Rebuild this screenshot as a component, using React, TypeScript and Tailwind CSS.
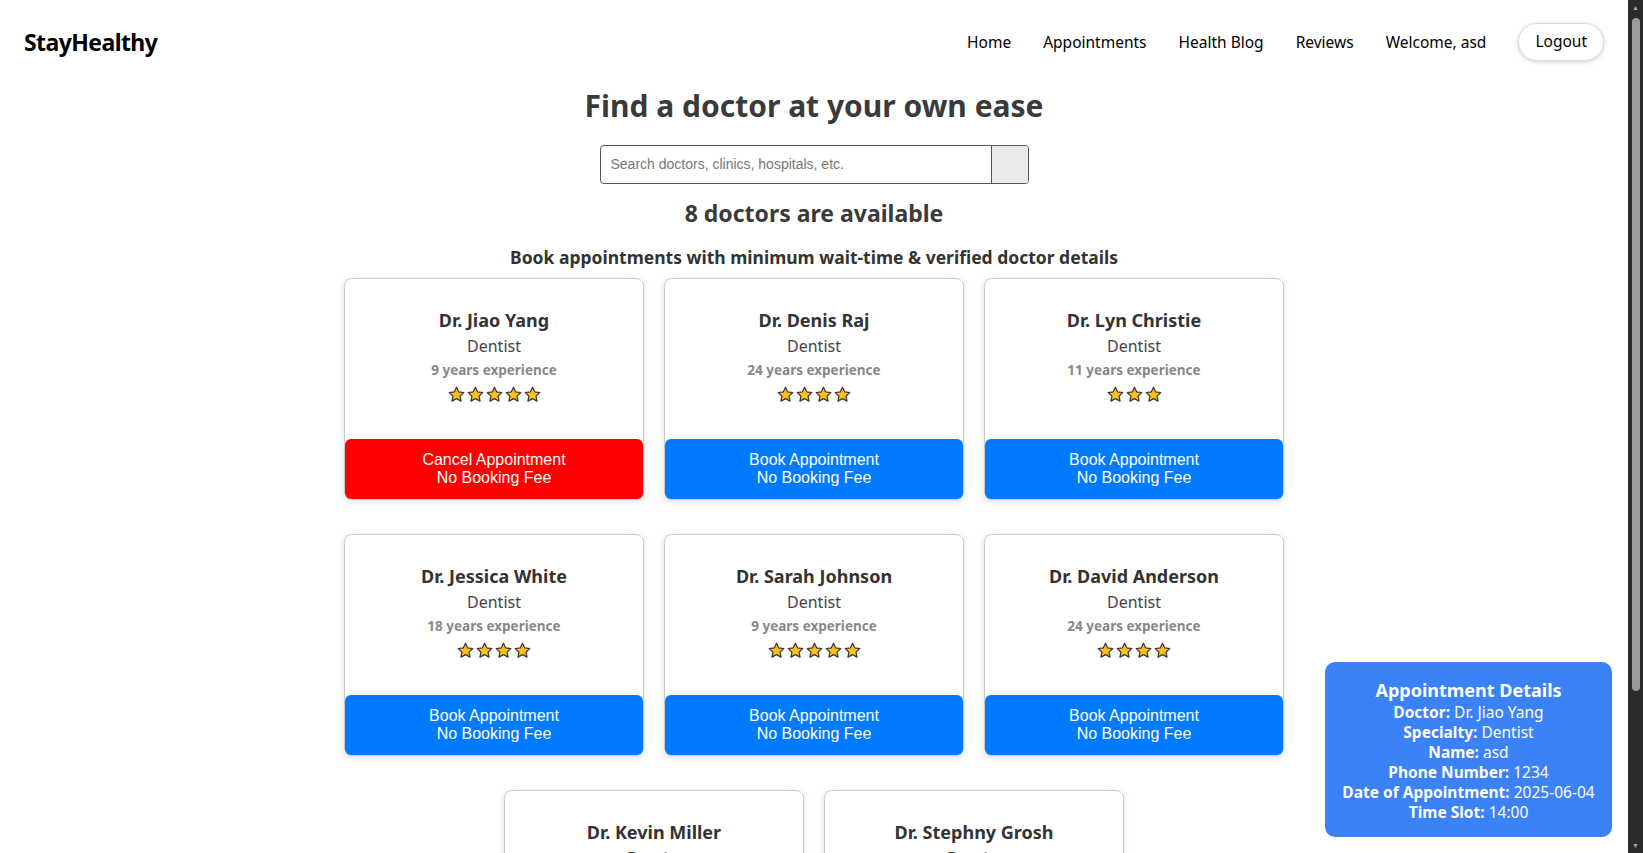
import React from "react";

type Doctor = {
  name: string;
  speciality: string;
  experience: number;
  ratings: number;
  booked?: boolean;
};

const doctors: Doctor[] = [
  { name: "Dr. Jiao Yang", speciality: "Dentist", experience: 9, ratings: 5, booked: true },
  { name: "Dr. Denis Raj", speciality: "Dentist", experience: 24, ratings: 4 },
  { name: "Dr. Lyn Christie", speciality: "Dentist", experience: 11, ratings: 3 },
  { name: "Dr. Jessica White", speciality: "Dentist", experience: 18, ratings: 4 },
  { name: "Dr. Sarah Johnson", speciality: "Dentist", experience: 9, ratings: 5 },
  { name: "Dr. David Anderson", speciality: "Dentist", experience: 24, ratings: 4 },
  { name: "Dr. Kevin Miller", speciality: "Dentist", experience: 7, ratings: 4 },
  { name: "Dr. Stephny Grosh", speciality: "Dentist", experience: 15, ratings: 5 },
];

const navLinks = ["Home", "Appointments", "Health Blog", "Reviews"];

function Star() {
  return (
    <svg width="17" height="17" viewBox="0 0 24 24">
      <path
        d="M12 1.8l3.1 6.6 7.2.9-5.3 5 1.4 7.1L12 17.9l-6.4 3.5 1.4-7.1-5.3-5 7.2-.9z"
        fill="#fcc21b"
        stroke="#3a3a3a"
        strokeWidth="1.8"
        strokeLinejoin="round"
      />
    </svg>
  );
}

function DoctorCard({ doc }: { doc: Doctor }) {
  return (
    <div className="w-[300px] h-[222px] flex flex-col items-center bg-white border border-[#cccccc] rounded-lg shadow-[0_2px_6px_rgba(0,0,0,0.12)]">
      <div className="pt-[29px] text-[18px] leading-6 font-bold text-[#333]">{doc.name}</div>
      <div className="mt-[2px] text-[16px] leading-6 text-[#444]">{doc.speciality}</div>
      <div className="mt-[2px] text-[13.5px] leading-5 font-bold text-[#888]">
        {doc.experience} years experience
      </div>
      <div className="mt-[6px] flex gap-[2px]">
        {Array.from({ length: doc.ratings }).map((_, i) => (
          <Star key={i} />
        ))}
      </div>
      <button
        className={
          "mt-auto w-full h-[60px] rounded-md text-white text-[16px] leading-[18px] font-['Liberation_Sans',Arial,sans-serif] " +
          (doc.booked ? "bg-[#ff0000]" : "bg-[#007bff]")
        }
      >
        {doc.booked ? "Cancel Appointment" : "Book Appointment"}
        <br />
        No Booking Fee
      </button>
    </div>
  );
}

// stand-in for the window scrollbar seen in the screenshot
function Scrollbar() {
  return (
    <div className="w-[15px] h-screen shrink-0 bg-[#2b2b2b] flex flex-col items-center">
      <div className="h-[15px] flex items-center justify-center text-[#a3a3a3] text-[7px] leading-none">▲</div>
      <div className="mt-[3px] w-[8px] h-[673px] rounded-full bg-[#9b9b9b]" />
      <div className="mt-auto h-[15px] flex items-center justify-center text-[#a3a3a3] text-[7px] leading-none">▼</div>
    </div>
  );
}

export default function App() {
  return (
    <div className="h-screen flex bg-white font-['Noto_Sans',sans-serif] text-[#111]">
      <div className="flex-1 h-screen overflow-y-auto">
        <nav className="h-[84px] px-6 flex items-center justify-between">
          <div className="text-[23px] font-bold text-black tracking-tight">StayHealthy</div>
          <div className="flex items-center gap-[32px] text-[15.5px] text-black">
            {navLinks.map((l) => (
              <a key={l} href="#" className="leading-6">
                {l}
              </a>
            ))}
            <span className="leading-6">Welcome, asd</span>
            <button className="h-[38px] px-4 rounded-full border border-[#ddd] bg-white shadow-[0_1px_4px_rgba(0,0,0,0.2)] text-[15.5px]">
              Logout
            </button>
          </div>
        </nav>

        <main className="flex flex-col items-center pb-[22px]">
          <h1 className="mt-[2px] text-[30px] leading-10 font-bold text-[#3a3a3a]">
            Find a doctor at your own ease
          </h1>
          <div className="mt-[19px] w-[429px] h-[39px] flex border border-[#555] rounded overflow-hidden">
            <input
              className="flex-1 px-[10px] text-[14px] outline-none font-['Liberation_Sans',Arial,sans-serif] placeholder:text-[#777]"
              placeholder="Search doctors, clinics, hospitals, etc."
            />
            <button className="w-[37px] bg-[#ece9e9] border-l border-[#555]" />
          </div>
          <h2 className="mt-[13px] text-[23px] leading-8 font-bold text-[#3a3a3a]">
            8 doctors are available
          </h2>
          <h3 className="mt-[16px] text-[17.5px] leading-6 font-bold text-[#333]">
            Book appointments with minimum wait-time &amp; verified doctor details
          </h3>
          <div className="mt-[9px] max-w-[960px] flex flex-wrap justify-center gap-x-5 gap-y-[34px]">
            {doctors.map((d) => (
              <DoctorCard key={d.name} doc={d} />
            ))}
          </div>
        </main>
      </div>

      <Scrollbar />

      <div className="fixed right-[31px] bottom-4 w-[287px] bg-[#3b82f6] rounded-[10px] text-white text-center pt-4 pb-[15px]">
        <div className="text-[18px] leading-6 font-bold">Appointment Details</div>
        <div className="text-[15.5px] leading-5">
          <p><b>Doctor:</b> Dr. Jiao Yang</p>
          <p><b>Specialty:</b> Dentist</p>
          <p><b>Name:</b> asd</p>
          <p><b>Phone Number:</b> 1234</p>
          <p><b>Date of Appointment:</b> 2025-06-04</p>
          <p><b>Time Slot:</b> 14:00</p>
        </div>
      </div>
    </div>
  );
}
